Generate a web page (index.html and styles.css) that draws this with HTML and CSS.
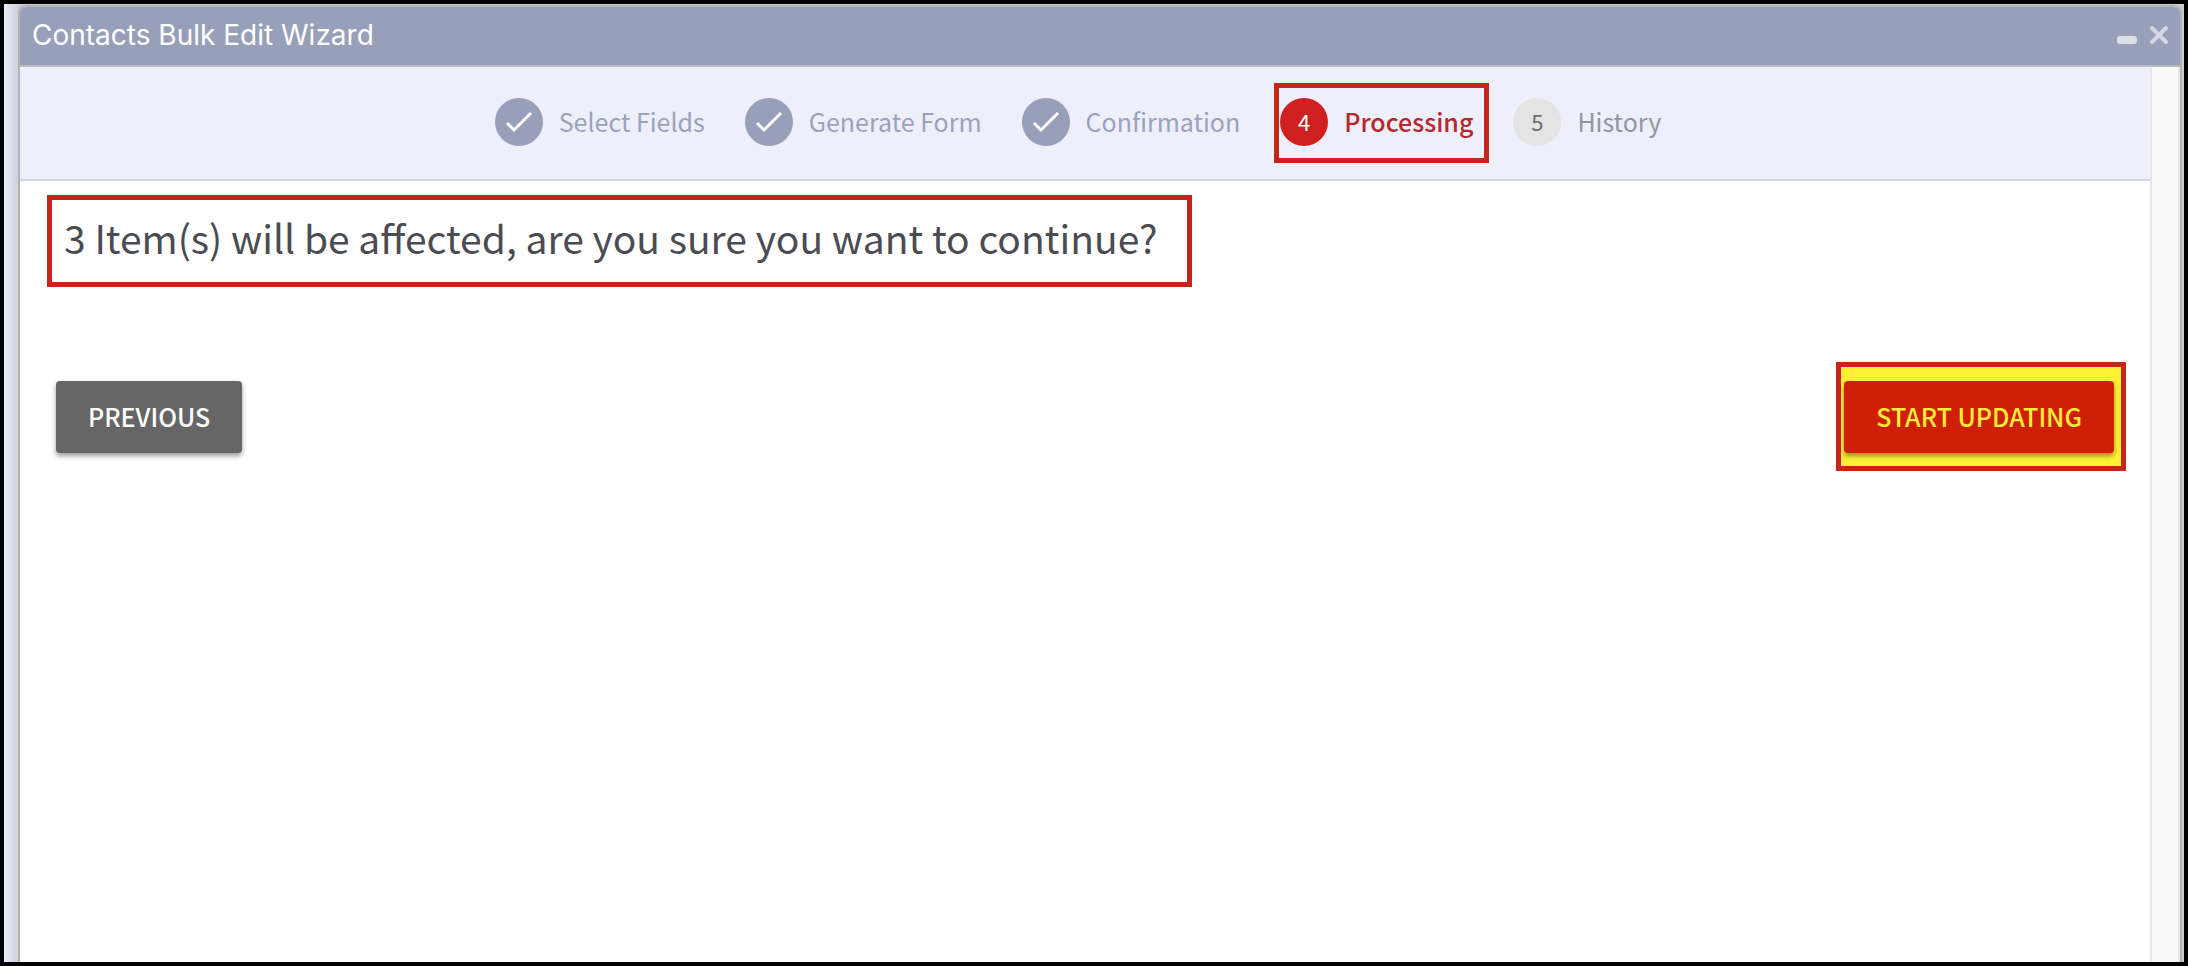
FILE: index.html
```html
<!DOCTYPE html>
<html lang="en">
<head>
<meta charset="UTF-8">
<meta name="viewport" content="width=device-width, initial-scale=1">
<title>Contacts Bulk Edit Wizard</title>
<link rel="stylesheet" href="styles.css">
</head>
<body>

<div class="screen">
	<!-- window -->
	<div class="window">

		<header class="titlebar">
			<h1>Contacts Bulk Edit Wizard</h1>
			<div class="tools">
				<button type="button" aria-label="Minimize">
					<svg width="22" height="30" viewBox="0 0 22 30"><rect x="1" y="16" width="20" height="8" rx="3" fill="#dcdfea"/></svg>
				</button>
				<button type="button" aria-label="Close">
					<svg width="22" height="30" viewBox="0 0 22 30"><path d="M4 8L18 22M18 8L4 22" stroke="#d3d6e3" stroke-width="4" stroke-linecap="round"/></svg>
				</button>
			</div>
		</header>

		<div class="window-body">
			<main class="content">

				<!-- steps -->
				<ol class="steps">
					<li class="step done">
						<span class="step-icon"><svg width="28" height="22" viewBox="0 0 28 22"><path d="M2 12L9 19L26 2" fill="none" stroke="#fff" stroke-width="3"/></svg></span>
						<span class="step-label">Select Fields</span>
					</li>
					<li class="step done">
						<span class="step-icon"><svg width="28" height="22" viewBox="0 0 28 22"><path d="M2 12L9 19L26 2" fill="none" stroke="#fff" stroke-width="3"/></svg></span>
						<span class="step-label">Generate Form</span>
					</li>
					<li class="step done">
						<span class="step-icon"><svg width="28" height="22" viewBox="0 0 28 22"><path d="M2 12L9 19L26 2" fill="none" stroke="#fff" stroke-width="3"/></svg></span>
						<span class="step-label">Confirmation</span>
					</li>
					<li class="step active" aria-current="step">
						<span class="step-icon">4</span>
						<span class="step-label">Processing</span>
					</li>
					<li class="step">
						<span class="step-icon">5</span>
						<span class="step-label">History</span>
					</li>
				</ol>
				<!-- /steps -->

				<div class="panel">
					<p class="message">3 Item(s) will be affected, are you sure you want to continue?</p>
					<div class="actions">
						<button type="button" class="btn btn-previous">PREVIOUS</button>
						<div class="highlight">
							<button type="button" class="btn btn-start">START UPDATING</button>
						</div>
					</div>
				</div>

			</main>
			<div class="scroll-track"></div>
		</div>

	</div>
	<!-- /window -->
</div>

</body>
</html>
```

FILE: styles.css
```css
* {
	box-sizing: border-box;
	margin: 0;
	padding: 0;
}

body {
	font-family: "Noto Sans CJK SC", "Open Sans", sans-serif;
	font-size: 25px;
	color: #4a4c52;
}

button {
	font: inherit;
	border: none;
	cursor: pointer;
}

.screen {
	display: flex;
	height: 100vh;
	padding: 1px 2px 0 14px;
	border: 4px solid #000;
	background: linear-gradient(to right, #ebecfa, #cfd0dc 14px, #ccc 15px);
	overflow: hidden;
}


/* window */
.window {
	flex: 1;
	display: flex;
	flex-direction: column;
	border: 2px solid #b2b3b6;
	border-bottom: none;
	border-radius: 8px 8px 0 0;
	background: #fff;
	overflow: hidden;
}

.titlebar {
	display: flex;
	align-items: center;
	justify-content: space-between;
	height: 60px;
	padding: 0 10px 2px 12px;
	border-bottom: 2px solid #b8bac6;
	background: #989fb9;
}

.titlebar h1 {
	font-family: Inter, sans-serif;
	font-size: 28px;
	font-weight: 400;
	color: #fff;
}

.tools {
	display: flex;
	gap: 10px;
}

.tools button {
	display: flex;
	background: none;
}

.window-body {
	flex: 1;
	display: flex;
}

.content {
	flex: 1;
}

.scroll-track {
	width: 30px;
	border: solid #e7e7e8;
	border-width: 0 2px;
	background: #fafafa;
}


/* steps */
.steps {
	display: flex;
	align-items: center;
	justify-content: center;
	gap: 40px;
	height: 114px;
	padding: 0 14px 2px 0;
	border-bottom: 2px solid #d7d8df;
	background: #edeffb;
	list-style: none;
}

.step {
	position: relative;
	display: flex;
	align-items: center;
	gap: 16px;
	color: #9396a0;
}

.step-icon {
	display: flex;
	align-items: center;
	justify-content: center;
	width: 48px;
	height: 48px;
	padding-bottom: 2px;
	border-radius: 50%;
	background: #e4e4e4;
	color: #6c6c6e;
	font-size: 22px;
	line-height: 46px;
}

.step-label {
	padding-bottom: 3px;
	line-height: 36px;
}

.done {
	color: #9ba2bb;
}

.done .step-icon {
	padding-bottom: 0;
	background: #989fb9;
}

.active {
	color: #b5282c;
	font-weight: 500;
}

.active .step-icon {
	background: #d01f1f;
	color: #fff;
	font-weight: 400;
}

/* red frame around the current step */
.active::after {
	content: "";
	position: absolute;
	inset: -15px -16px -17px -6px;
	border: 5px solid #c5261c;
}


/* panel */
.panel {
	padding: 14px 24px 24px 27px;
}

.message {
	width: fit-content;
	padding: 8px 30px 16px 12px;
	border: 5px solid #c5261c;
	font-size: 39px;
	line-height: 58px;
}

.actions {
	display: flex;
	align-items: center;
	justify-content: space-between;
	margin-top: 75px;
	padding-left: 9px;
}

.btn {
	height: 72px;
	padding: 0 32px 2px;
	border-radius: 4px;
	box-shadow: 0 3px 5px rgba(0, 0, 0, .4);
	font-weight: 500;
}

.btn-previous {
	background: #666;
	color: #fff;
}

.btn-start {
	background: #cf1f06;
	color: #ffeb3b;
}

.highlight {
	padding: 14px 7px 13px 3px;
	border: 5px solid #c5261c;
	background: #fff035;
}
```
